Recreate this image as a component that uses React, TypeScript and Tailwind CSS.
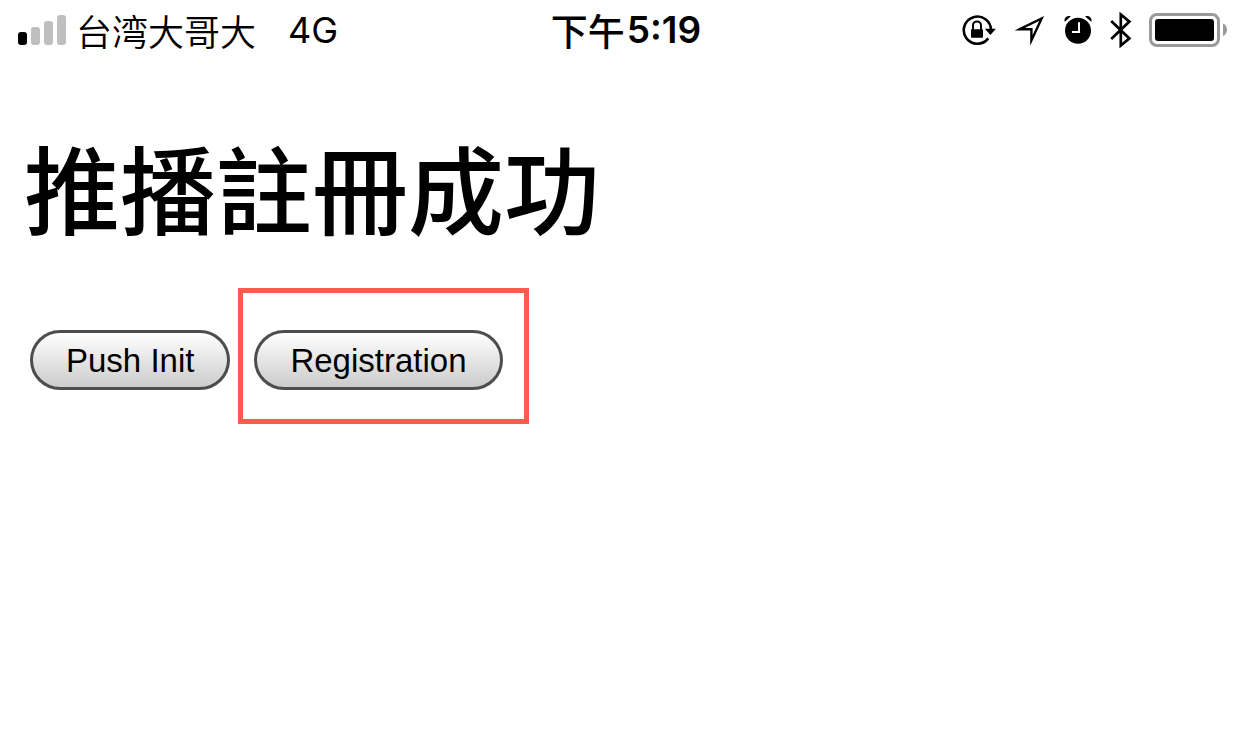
import type { ReactNode } from "react";

function SignalBars() {
  return (
    <svg width="48" height="30" viewBox="0 0 48 30" role="img" aria-label="Signal strength">
      <rect x="0" y="17" width="9" height="13" rx="3" fill="#000" />
      <rect x="13" y="12" width="9" height="18" rx="3" fill="#bfbfbf" />
      <rect x="26" y="6" width="9" height="24" rx="3" fill="#bfbfbf" />
      <rect x="39" y="0" width="9" height="30" rx="3" fill="#bfbfbf" />
    </svg>
  );
}

function RotationLockIcon() {
  return (
    <svg width="35" height="32" viewBox="0 0 35 32" role="img" aria-label="Rotation lock">
      <path d="M30 16.2A13.6 13.6 0 1 0 27.2 24.4" fill="none" stroke="#000" strokeWidth="2.6" />
      <path d="M23.8 14.8H35L29.4 20.9Z" fill="#000" />
      <rect x="10" y="15.2" width="12" height="8.6" rx="0.8" fill="#000" />
      <path d="M12 16V11.4a4 4 0 0 1 8 0V16" fill="none" stroke="#000" strokeWidth="2" />
    </svg>
  );
}

function LocationIcon() {
  return (
    <svg width="30" height="30" viewBox="0 0 30 30" role="img" aria-label="Location">
      <path
        d="M4.8 14.2 26.6 3.5 16.4 25.4V14.2Z"
        fill="none"
        stroke="#000"
        strokeWidth="2.4"
        strokeMiterlimit="10"
      />
    </svg>
  );
}

function AlarmIcon() {
  return (
    <svg width="28" height="30" viewBox="0 0 28 30" role="img" aria-label="Alarm">
      <circle cx="14" cy="15.8" r="13" fill="#000" />
      <path d="M0.8 6.8C-0.8 3.5 3 -0.4 6.8 1.4Z" fill="#000" />
      <path d="M27.2 6.8C28.8 3.5 25 -0.4 21.2 1.4Z" fill="#000" />
      <path d="M15 7.2V17H8" fill="none" stroke="#fff" strokeWidth="2" />
    </svg>
  );
}

function BluetoothIcon() {
  return (
    <svg width="22" height="36" viewBox="0 0 22 36" role="img" aria-label="Bluetooth">
      <path
        d="M1.2 9 19.4 26.4 10.8 33.5V2.5L19.4 9.6 1.2 27"
        fill="none"
        stroke="#000"
        strokeWidth="2.7"
        strokeMiterlimit="10"
      />
    </svg>
  );
}

function BatteryIcon() {
  return (
    <svg width="79" height="34" viewBox="0 0 79 34" role="img" aria-label="Battery full">
      <rect x="1.5" y="1.5" width="68" height="31" rx="6.5" fill="none" stroke="#999" strokeWidth="3" />
      <rect x="6" y="6" width="59" height="22" rx="3" fill="#000" />
      <path d="M74 10.5C79.3 12.5 79.3 21 74 23Z" fill="#999" />
    </svg>
  );
}

function PillButton({ children }: { children: ReactNode }) {
  return (
    <button
      type="button"
      className="flex h-[60px] items-center rounded-full border-[3px] border-[#4d4d4d] bg-linear-to-b from-white to-[#cccccc] px-[33px] font-['Liberation_Sans',Arial,sans-serif] text-[33px] leading-none whitespace-nowrap text-black"
    >
      {children}
    </button>
  );
}

export default function App() {
  return (
    <div className="min-h-screen bg-white font-['Inter','Noto_Sans_CJK_TC',sans-serif] text-black">
      <header className="grid h-[60px] grid-cols-[1fr_auto_1fr] items-center pr-[14px] pl-[18px]">
        <div className="flex items-center gap-[10px] whitespace-nowrap">
          <SignalBars />
          <span className="font-['Noto_Sans_CJK_SC',sans-serif] text-[36px] leading-[60px] font-[350]">台湾大哥大</span>
          <span className="ml-[22px] text-[36px] leading-[60px] font-normal">4G</span>
        </div>
        <time className="flex items-center gap-[2px] pl-[6px] text-[37px] leading-[60px] whitespace-nowrap">
          <span className="font-['Noto_Sans_CJK_TC',sans-serif] font-medium">下午</span>
          <span className="font-semibold">5:19</span>
        </time>
        <div className="flex items-center justify-end">
          <RotationLockIcon />
          <span className="ml-[19px]"><LocationIcon /></span>
          <span className="ml-[19px]"><AlarmIcon /></span>
          <span className="ml-[18px]"><BluetoothIcon /></span>
          <span className="ml-[17px]"><BatteryIcon /></span>
        </div>
      </header>
      <main className="px-[24px] pt-[58px]">
        <h1 className="font-['Noto_Sans_CJK_TC',sans-serif] text-[96px] leading-[136px] font-medium">推播註冊成功</h1>
        <div className="mt-[34px] flex flex-wrap items-start gap-[8px] pl-[6px]">
          <div className="pt-[42px]">
            <PillButton>Push Init</PillButton>
          </div>
          <div className="border-[5px] border-[#fa5c50] pt-[37px] pr-[21px] pb-[29px] pl-[11px]">
            <PillButton>Registration</PillButton>
          </div>
        </div>
      </main>
    </div>
  );
}
